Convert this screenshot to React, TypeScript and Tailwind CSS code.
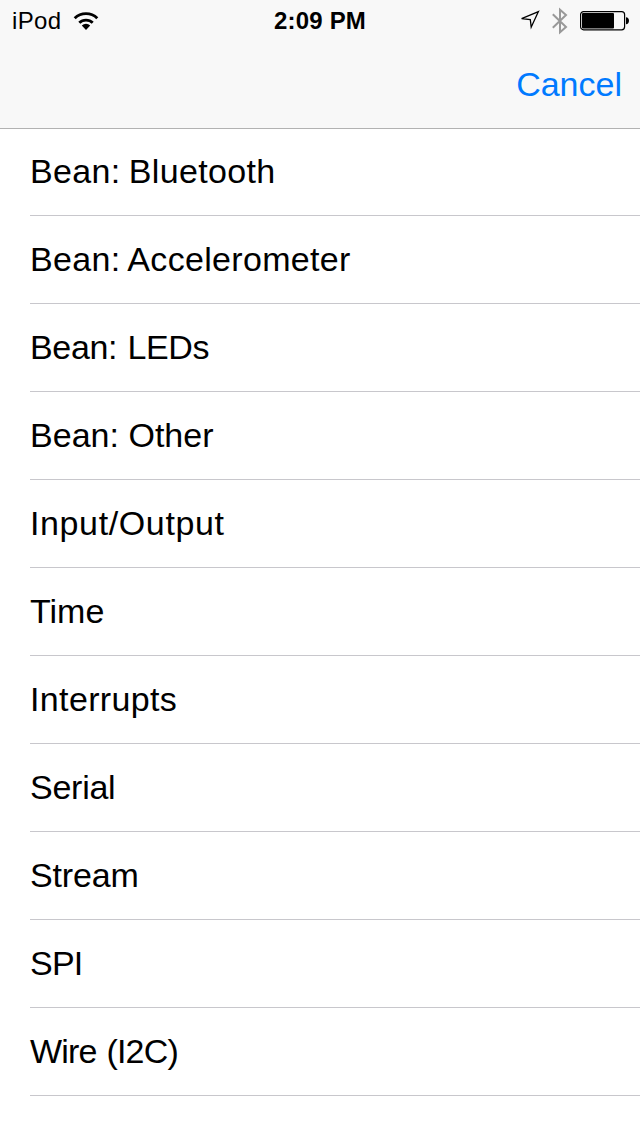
const rows: { label: string; tracking: string }[] = [
  { label: "Bean: Bluetooth", tracking: "tracking-[0.34px] [word-spacing:-1.6px]" },
  { label: "Bean: Accelerometer", tracking: "tracking-[0.32px] [word-spacing:-1px]" },
  { label: "Bean: LEDs", tracking: "tracking-[-0.34px] [word-spacing:1.2px]" },
  { label: "Bean: Other", tracking: "tracking-[0.02px]" },
  { label: "Input/Output", tracking: "tracking-[0.62px]" },
  { label: "Time", tracking: "tracking-normal" },
  { label: "Interrupts", tracking: "tracking-[0.36px]" },
  { label: "Serial", tracking: "tracking-[-0.25px]" },
  { label: "Stream", tracking: "tracking-[-0.15px]" },
  { label: "SPI", tracking: "tracking-[-0.8px]" },
  { label: "Wire (I2C)", tracking: "tracking-[-0.84px] [word-spacing:1.4px]" },
];

function WifiIcon() {
  return (
    <svg width="26" height="20" viewBox="0 0 26 20" fill="none" stroke="#000" strokeWidth="2.9">
      <path d="M1.7 7.2a16.2 16.2 0 0 1 22.6 0" />
      <path d="M6.3 11.8a9.6 9.6 0 0 1 13.4 0" />
      <path d="M13 19l-4.2-4.5a6.2 6.2 0 0 1 8.4 0z" fill="#000" stroke="none" />
    </svg>
  );
}

function LocationIcon() {
  return (
    <svg width="22" height="22" viewBox="0 0 22 22" fill="none" stroke="#000" strokeWidth="1.3">
      <path d="M19.4 1.6L2.6 8.7L11.3 9.5L12.2 17.2Z" />
    </svg>
  );
}

function BluetoothIcon() {
  return (
    <svg width="18" height="28" viewBox="0 0 18 28" fill="none" stroke="#999" strokeWidth="2">
      <path d="M1.8 7.2L15 20L9 25.2V2.8L15 8L1.8 20.8" />
    </svg>
  );
}

function BatteryIcon() {
  return (
    <svg width="50" height="20" viewBox="0 0 50 20">
      <rect x="0.6" y="0.6" width="44" height="18.2" rx="3" fill="none" stroke="#000" strokeWidth="1.2" />
      <rect x="2" y="2" width="32" height="15.4" rx="1" />
      <path d="M46 6.2c1.8 0 3 1.6 3 3.5s-1.2 3.5-3 3.5z" />
    </svg>
  );
}

export default function App() {
  return (
    <div className="flex h-[1136px] w-[640px] flex-col overflow-hidden bg-white font-['Liberation_Sans',Arial,sans-serif] text-black">
      <header className="flex h-[129px] shrink-0 flex-col border-b border-[#b2b2b2] bg-[#f8f8f8]">
        <div className="grid h-[41px] grid-cols-3 items-center pl-3 pr-[10px]">
          <div className="flex items-center gap-3">
            <span className="pt-px text-2xl leading-10 tracking-[0.35px]">iPod</span>
            <WifiIcon />
          </div>
          <span className="pt-px pr-[2px] text-center text-2xl leading-10 font-bold tracking-[0.2px]">2:09 PM</span>
          <div className="flex items-center justify-end">
            <LocationIcon />
            <div className="ml-[10px]">
              <BluetoothIcon />
            </div>
            <div className="ml-[11px]">
              <BatteryIcon />
            </div>
          </div>
        </div>
        <div className="flex flex-1 items-center justify-end pr-[18px]">
          <button className="text-[34px] leading-[51px] text-[#007aff]">Cancel</button>
        </div>
      </header>
      <ul className="-mt-px">
        {rows.map((row) => (
          <li
            key={row.label}
            className={`ml-[30px] flex h-[88px] items-center border-b border-[#c8c7cc] text-[34px] ${row.tracking}`}
          >
            {row.label}
          </li>
        ))}
      </ul>
    </div>
  );
}
